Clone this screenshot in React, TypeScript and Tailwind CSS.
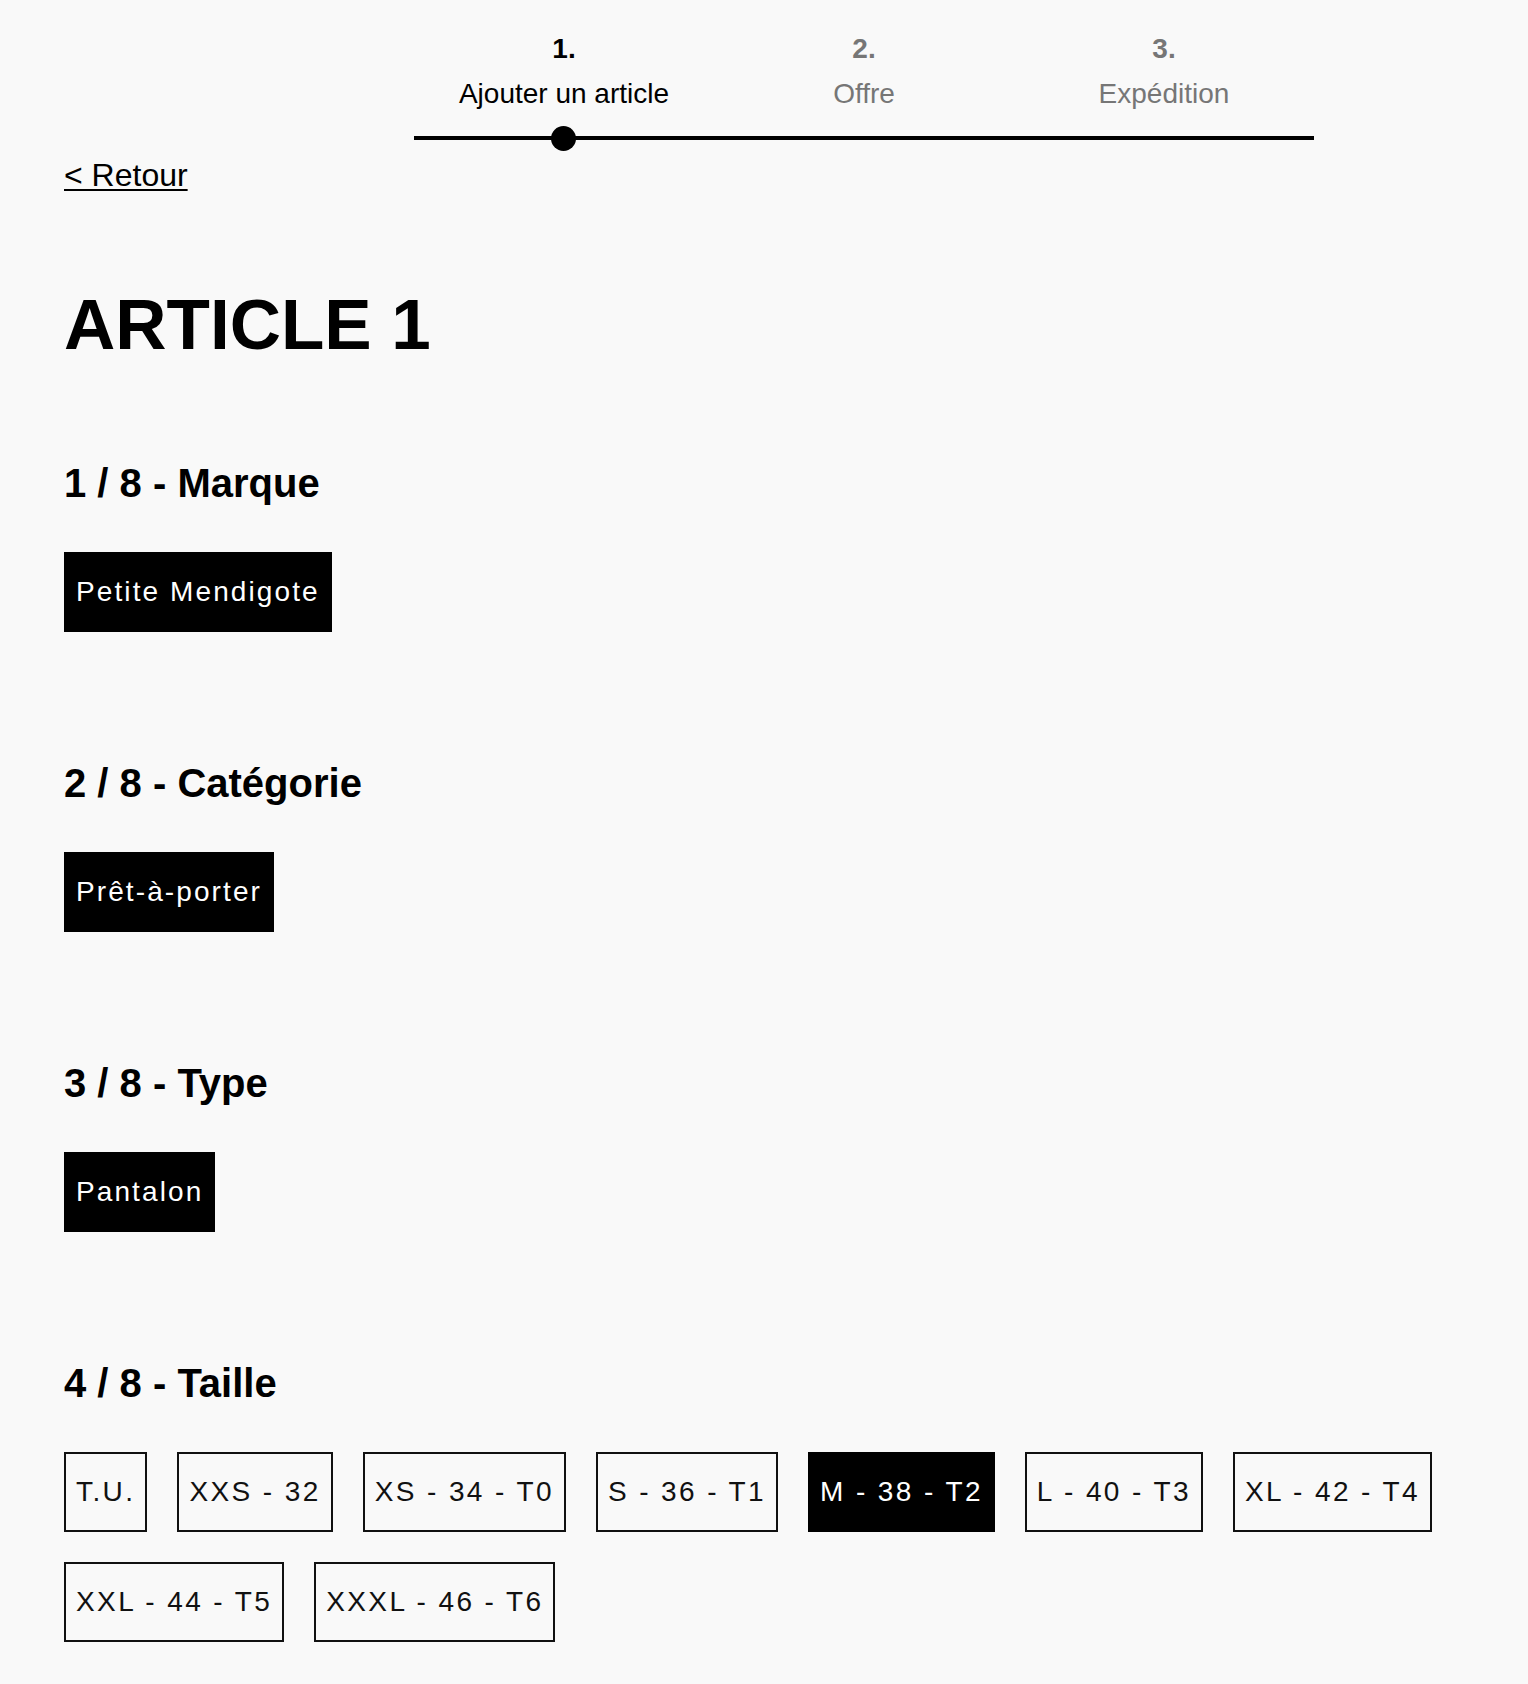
import React, {useState} from 'react';

const steps = [
	{num: '1.', label: 'Ajouter un article'},
	{num: '2.', label: 'Offre'},
	{num: '3.', label: 'Expédition'},
];

const sizes = [
	'T.U.',
	'XXS - 32',
	'XS - 34 - T0',
	'S - 36 - T1',
	'M - 38 - T2',
	'L - 40 - T3',
	'XL - 42 - T4',
	'XXL - 44 - T5',
	'XXXL - 46 - T6',
];

// selected value of a single-choice section (brand, category, type)
const Tag = ({label}: {label: string}) => (
	<button className="h-[80px] flex items-center px-[10px] border-2 border-black bg-black text-white text-[28px] tracking-[2.1px] leading-none">
		{label}
	</button>
);

const SizeButton = ({label, selected, onClick}: {label: string; selected?: boolean; onClick?: () => void}) => (
	<button
		onClick={onClick}
		className={
			selected
				? 'h-[80px] flex items-center px-[10px] border-2 border-black bg-black text-white text-[28px] tracking-[2.4px] leading-none'
				: 'h-[80px] flex items-center px-[10px] border-2 border-[#111] bg-transparent text-[#111] text-[28px] tracking-[2.4px] leading-none'
		}
	>
		{label}
	</button>
);

const Section = ({title, children}: {title: string; children: React.ReactNode}) => (
	<section className="mb-[127px] last:mb-0">
		<h2 className="text-[40px] font-bold leading-[1.2]">{title}</h2>
		<div className="mt-[45px]">{children}</div>
	</section>
);

const App = () => {
	const [size, setSize] = useState('M - 38 - T2');
	const step = 0;

	return (
		<div className="min-h-screen bg-[#f9f9f9] text-black font-['Liberation_Sans',Arial,sans-serif] px-16 pt-[32px] pb-[43px]">
			{/* stepper */}
			<div className="ml-[350px] w-[900px]">
				<div className="grid grid-cols-3 text-center">
					{steps.map((s, i) => (
						<div key={s.num} className={i === step ? 'text-black' : 'text-[#767676]'}>
							<div className="text-[28px] font-bold leading-[1.2]">{s.num}</div>
							<div className="mt-[11px] text-[28px] leading-[1.2]">{s.label}</div>
						</div>
					))}
				</div>
				<div className="relative mt-[26px] h-1 bg-black">
					<div className="absolute left-[137px] top-[-10.5px] w-[25px] h-[25px] rounded-full bg-black" />
				</div>
			</div>

			<a href="#" className="inline-block mt-[16px] text-[32px] leading-[1.2] underline underline-offset-[3px] decoration-2">
				&lt; Retour
			</a>

			<h1 className="mt-[94px] text-[71px] font-bold leading-none">ARTICLE 1</h1>

			<div className="mt-[99px]">
				<Section title="1 / 8 - Marque">
					<div className="flex">
						<Tag label="Petite Mendigote" />
					</div>
				</Section>
				<Section title="2 / 8 - Catégorie">
					<div className="flex">
						<Tag label="Prêt-à-porter" />
					</div>
				</Section>
				<Section title="3 / 8 - Type">
					<div className="flex">
						<Tag label="Pantalon" />
					</div>
				</Section>
				<Section title="4 / 8 - Taille">
					<div className="flex flex-wrap gap-[30px]">
						{sizes.map((s) => (
							<SizeButton key={s} label={s} selected={s === size} onClick={() => setSize(s)} />
						))}
					</div>
				</Section>
			</div>
		</div>
	);
};

export default App;
